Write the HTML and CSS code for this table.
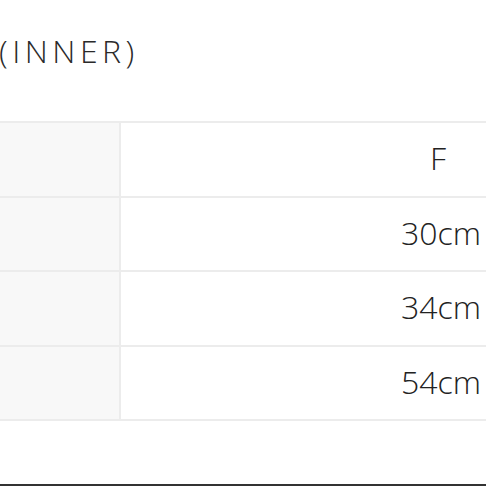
FILE: index.html
```html
<!DOCTYPE html>
<html>
<head>
<meta charset="utf-8">
<link rel="stylesheet" href="styles.css">
</head>
<body>
<div class="page">
  <h2 class="title">(INNER)</h2>
  <div class="table">
    <div class="row">
      <div class="label"></div>
      <div class="value">F</div>
    </div>
    <div class="row">
      <div class="label"></div>
      <div class="value">30cm</div>
    </div>
    <div class="row">
      <div class="label"></div>
      <div class="value">34cm</div>
    </div>
    <div class="row">
      <div class="label"></div>
      <div class="value">54cm</div>
    </div>
  </div>
  <div class="spacer"></div>
  <div class="bottom-line"></div>
</div>
</body>
</html>
```

FILE: styles.css
```css
html, body {
  margin: 0;
  padding: 0;
  background: #ffffff;
}
.page {
  width: 486px;
  height: 486px;
  display: flex;
  flex-direction: column;
  overflow: hidden;
  font-family: "Open Sans", "Liberation Sans", sans-serif;
  color: #333;
}
.title {
  margin: 0;
  padding: 28px 0 0 0;
  height: 121px;
  box-sizing: border-box;
  margin-left: -1px;
  font-weight: 300;
  font-size: 32px;
  letter-spacing: 4.5px;
  line-height: 46px;
  color: #2a2a2a;
}
.table {
  border-top: 2px solid #ececec;
  display: flex;
  flex-direction: column;
}
.row {
  display: grid;
  grid-template-columns: 121px 1fr;
  height: 72px;
  border-bottom: 2px solid #ececec;
}
.row:nth-child(odd) {
  height: 73px;
}
.label {
  background: #f8f8f8;
  border-right: 2px solid #ececec;
}
.value {
  display: flex;
  align-items: center;
  justify-content: flex-end;
  padding-right: 5px;
  padding-bottom: 4px;
  font-size: 32px;
  font-weight: 300;
  color: #222;
}
.row:first-child .value {
  padding-right: 40px;
}
.spacer {
  flex: 1;
}
.bottom-line {
  height: 2px;
  background: #333;
}
```
